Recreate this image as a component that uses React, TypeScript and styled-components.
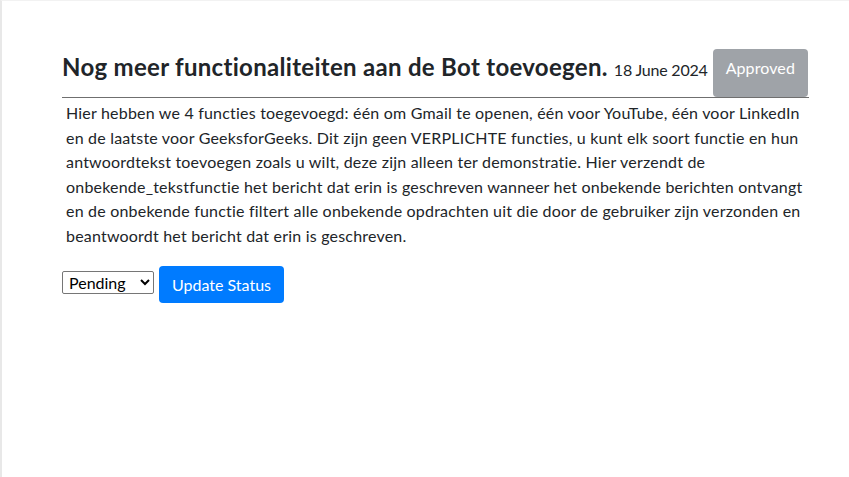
import React from "react";
import styled, { createGlobalStyle } from "styled-components";

const Global = createGlobalStyle`
  html, body { margin: 0; padding: 0; background: #fff; }
  body { font-family: Lato, "Liberation Sans", sans-serif; color: #212529; }
  * { box-sizing: border-box; }
`;

const Page = styled.div`
  min-height: 477px;
  border-left: 2px solid #e8e8e8;
  border-top: 1px solid #f2f2f2;
  padding: 48px 0 0 60px;
`;

const Card = styled.div`
  width: 747px;
`;

const Header = styled.div`
  display: flex;
  align-items: stretch;
  border-bottom: 1px solid #6f6f6f;
`;

const Title = styled.h3`
  margin: 0;
  padding-top: 2px;
  font-size: 24px;
  font-weight: 700;
  letter-spacing: 0.3px;
  line-height: 32px;
  white-space: nowrap;
`;

const DateText = styled.span`
  margin-left: 6px;
  font-size: 16px;
  font-weight: 400;
  letter-spacing: -0.2px;
`;

const StatusBadge = styled.button`
  margin-left: 5px;
  height: 48px;
  padding: 0 13px 10px;
  border: none;
  border-radius: 4px;
  background: #9fa3a8;
  color: #fff;
  font-family: inherit;
  font-size: 16px;
  letter-spacing: 0.1px;
  line-height: 24px;
  cursor: default;
`;

const Body = styled.p`
  margin: 3px 0 18px;
  padding: 0 4px;
  font-size: 16px;
  letter-spacing: 0.2px;
  line-height: 24.5px;
`;

const Controls = styled.div`
  display: flex;
  align-items: flex-start;
  gap: 5px;
`;

const Select = styled.select`
  width: 92px;
  height: 23px;
  margin-top: 5px;
  font-family: inherit;
  font-size: 16px;
  color: #000;
  border: 1px solid #767676;
  border-radius: 2px;
  background: #fff;
  padding: 0 2px;
`;

const PrimaryButton = styled.button`
  height: 37px;
  padding: 0 13px;
  border: none;
  border-radius: 4px;
  background: #007bff;
  color: #fff;
  font-family: inherit;
  font-size: 16px;
  cursor: pointer;
`;

export default function App() {
  return (
    <>
      <Global />
      <Page>
        <Card>
          <Header>
            <Title>
              Nog meer functionaliteiten aan de Bot toevoegen.
              <DateText>18 June 2024</DateText>
            </Title>
            <StatusBadge disabled>Approved</StatusBadge>
          </Header>
          <Body>
            Hier hebben we 4 functies toegevoegd: één om Gmail te openen, één voor YouTube, één voor LinkedIn
            en de laatste voor GeeksforGeeks. Dit zijn geen VERPLICHTE functies, u kunt elk soort functie en hun
            antwoordtekst toevoegen zoals u wilt, deze zijn alleen ter demonstratie. Hier verzendt de
            onbekende_tekstfunctie het bericht dat erin is geschreven wanneer het onbekende berichten ontvangt
            en de onbekende functie filtert alle onbekende opdrachten uit die door de gebruiker zijn verzonden en
            beantwoordt het bericht dat erin is geschreven.
          </Body>
          <Controls>
            <Select defaultValue="Pending">
              <option>Pending</option>
              <option>Approved</option>
              <option>Rejected</option>
            </Select>
            <PrimaryButton>Update Status</PrimaryButton>
          </Controls>
        </Card>
      </Page>
    </>
  );
}
